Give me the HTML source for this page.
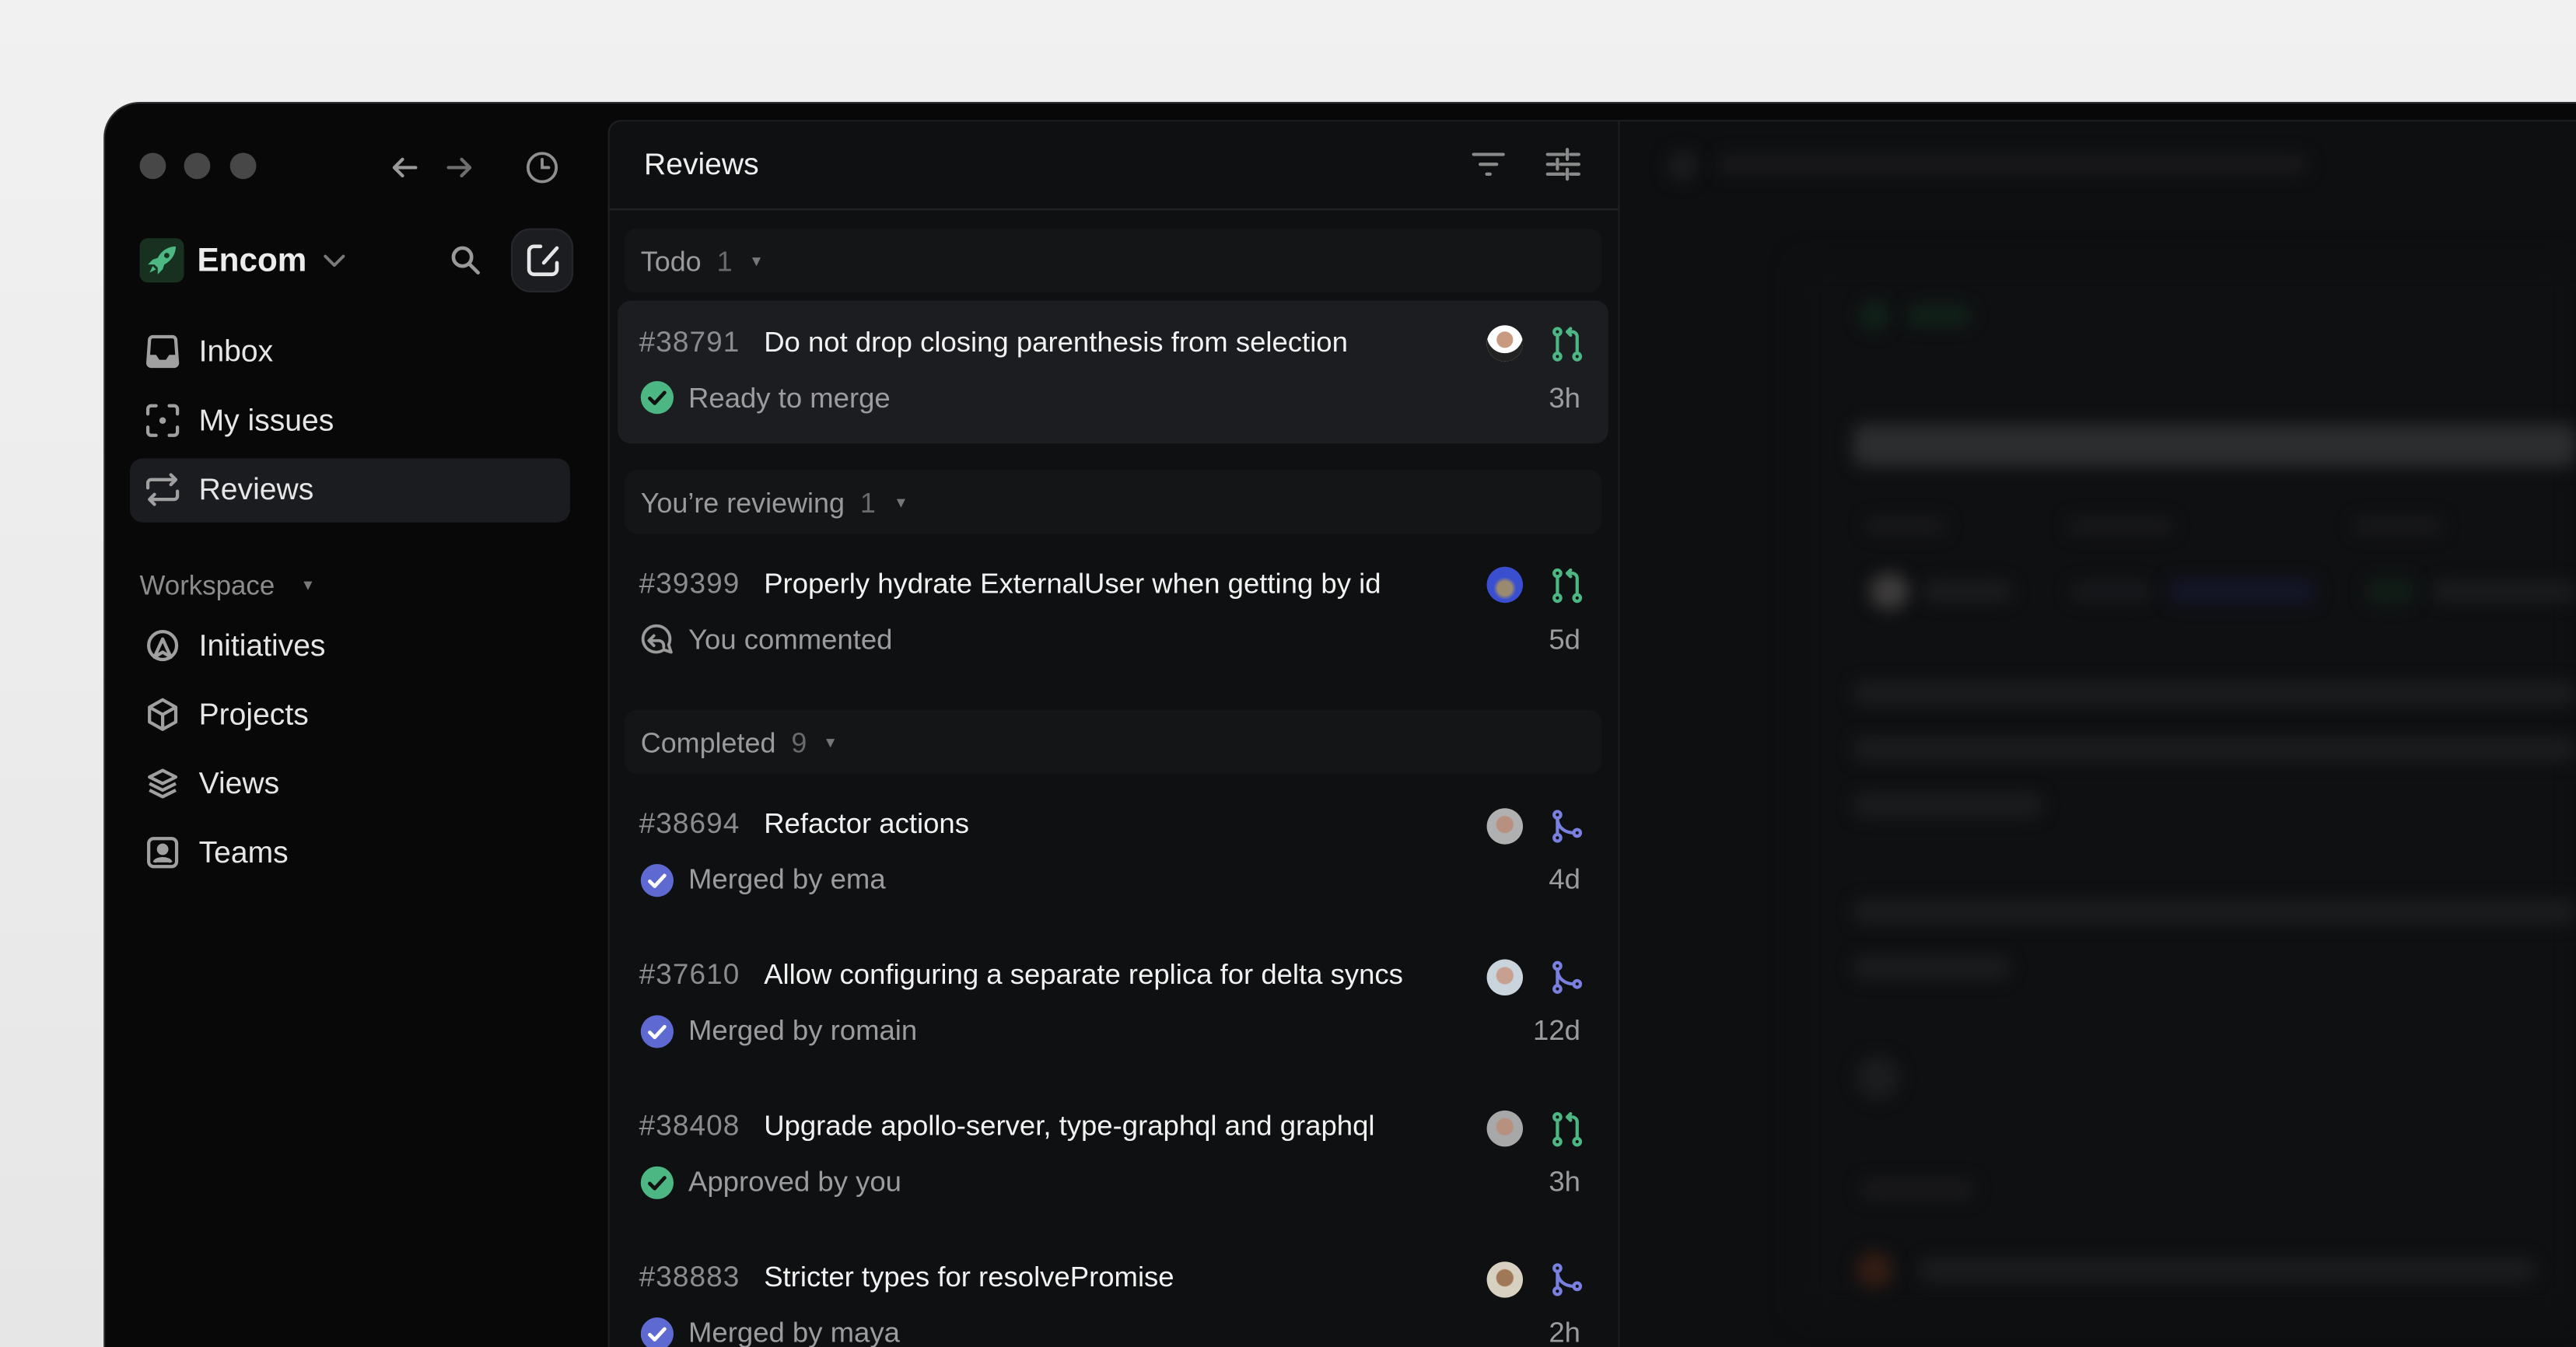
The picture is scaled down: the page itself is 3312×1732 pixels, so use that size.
<!DOCTYPE html>
<html><head><meta charset="utf-8"><style>
*{margin:0;padding:0;box-sizing:border-box}
html,body{width:3312px;height:1732px;overflow:hidden;background:#ececec}
#s{position:absolute;left:0;top:0;width:1568px;height:820px;overflow:hidden;transform:scale(2.11224);transform-origin:0 0;font-family:"Liberation Sans",sans-serif;background:linear-gradient(180deg,#f1f1f1,#e6e6e6)}
.a{position:absolute}
.win{left:63px;top:62px;width:1505px;height:758px;background:#080808;border:1.5px solid #2f3033;border-right:none;border-bottom:none;border-radius:22px 0 0 0}
.t{position:absolute;white-space:nowrap;line-height:1}
.nav{font-size:18.5px;color:#e6e6e6}
.gh{position:absolute;left:380px;width:595px;height:39px;background:#141517;border-radius:8px}
.gh span{position:absolute;top:11px;font-size:17px;color:#9a9a9c;white-space:nowrap}
.id{color:#8c8c8f;font-size:17.5px;letter-spacing:0.5px}
.ti{color:#f2f2f2;font-size:17.3px}
.st{color:#9c9c9f;font-size:17.3px}
.tm{color:#9c9c9f;font-size:17.3px;text-align:right;width:60px;left:902px}
.bl{position:absolute;background:#1c1d1f;border-radius:6px;filter:blur(5px)}
svg{position:absolute;overflow:visible}
</style></head><body><div id="s">
<div class="a win"></div>
<div class="a" style="left:85px;top:93px;width:16px;height:16px;border-radius:50%;background:#474747"></div>
<div class="a" style="left:112px;top:93px;width:16px;height:16px;border-radius:50%;background:#474747"></div>
<div class="a" style="left:140px;top:93px;width:16px;height:16px;border-radius:50%;background:#474747"></div>
<svg style="left:238px;top:95px" width="16" height="14" viewBox="0 0 16 14" fill="none" stroke="#9a9a9a" stroke-width="2" stroke-linecap="round" stroke-linejoin="round"><path d="M15 7H2M7 2L2 7l5 5"/></svg>
<svg style="left:272px;top:95px" width="16" height="14" viewBox="0 0 16 14" fill="none" stroke="#6e6e6e" stroke-width="2" stroke-linecap="round" stroke-linejoin="round"><path d="M1 7h13M9 2l5 5-5 5"/></svg>
<svg style="left:320px;top:92px" width="20" height="20" viewBox="0 0 20 20" fill="none" stroke="#8f8f8f" stroke-width="1.8" stroke-linecap="round"><circle cx="10" cy="10" r="8.6"/><path d="M10 5v5h4"/></svg>
<div class="a" style="left:85px;top:145px;width:27px;height:27px;border-radius:5px;background:#17301f"></div>
<svg style="left:89px;top:149px" width="19" height="19" viewBox="0 0 19 19"><path d="M18 1c-5 0-9 3-11 7L4 9l-3 3 4 0 2 2 0 4 3-3 1-3c4-2 7-6 7-11z" fill="#4cb782"/><circle cx="12.5" cy="6.5" r="1.6" fill="#17301f"/><path d="M4 13l-2 4 4-2z" fill="#4cb782"/></svg>
<div class="t" style="left:120px;top:149px;font-size:20px;font-weight:bold;color:#ececec">Encom</div>
<svg style="left:197px;top:155px" width="13" height="8" viewBox="0 0 13 8" fill="none" stroke="#7a7a7a" stroke-width="1.8" stroke-linecap="round" stroke-linejoin="round"><path d="M1 1l5.5 5.5L12 1"/></svg>
<svg style="left:274px;top:149px" width="19" height="19" viewBox="0 0 19 19" fill="none" stroke="#9a9a9a" stroke-width="2.2" stroke-linecap="round"><circle cx="7.5" cy="7.5" r="5.5"/><path d="M11.5 11.5l5.5 5.5"/></svg>
<div class="a" style="left:311px;top:139px;width:38px;height:39px;border-radius:12px;background:#1c1d21;border:1px solid #26272b"></div>
<svg style="left:320px;top:148px" width="21" height="21" viewBox="0 0 21 21" fill="none" stroke="#e6e6e6" stroke-width="2.2" stroke-linecap="round" stroke-linejoin="round"><path d="M9 2H5a3 3 0 0 0-3 3v11a3 3 0 0 0 3 3h11a3 3 0 0 0 3-3v-4"/><path d="M19 3l-8 9"/></svg>
<svg style="left:89px;top:204px" width="20" height="20" viewBox="0 0 20 20"><path d="M4 1h12a2 2 0 0 1 2 2l1 14a2 2 0 0 1-2 2H3a2 2 0 0 1-2-2L2 3a2 2 0 0 1 2-2z" fill="none" stroke="#a0a0a0" stroke-width="2"/><path d="M1.5 12H6l2 3h4l2-3h4.5V17a2 2 0 0 1-2 2H3a2 2 0 0 1-2-2z" fill="#a0a0a0"/></svg>
<div class="t nav" style="left:121px;top:205px">Inbox</div>
<svg style="left:89px;top:246px" width="20" height="20" viewBox="0 0 20 20" fill="none" stroke="#a0a0a0" stroke-width="2" stroke-linecap="round"><path d="M1 6V3a2 2 0 0 1 2-2h3M14 1h3a2 2 0 0 1 2 2v3M19 14v3a2 2 0 0 1-2 2h-3M6 19H3a2 2 0 0 1-2-2v-3"/><circle cx="10" cy="10" r="2" fill="#a0a0a0" stroke="none"/></svg>
<div class="t nav" style="left:121px;top:247px">My issues</div>
<div class="a" style="left:79px;top:279px;width:268px;height:39px;border-radius:8px;background:#1b1c20"></div>
<svg style="left:89px;top:288px" width="20" height="20" viewBox="0 0 20 20" fill="none" stroke="#a0a0a0" stroke-width="2" stroke-linecap="round" stroke-linejoin="round"><path d="M1 9V6a2 2 0 0 1 2-2h15M15 1l3 3-3 3M19 11v3a2 2 0 0 1-2 2H2M5 13l-3 3 3 3"/></svg>
<div class="t nav" style="left:121px;top:289px">Reviews</div>
<div class="t" style="left:85px;top:349px;font-size:16.5px;color:#8c8c8c">Workspace</div>
<div class="t" style="left:183px;top:352px;font-size:9px;color:#777">▼</div>
<svg style="left:89px;top:383px" width="20" height="20" viewBox="0 0 20 20" fill="none" stroke="#a0a0a0" stroke-width="2" stroke-linejoin="round"><circle cx="10" cy="10" r="8.5"/><path d="M5 17l5-11 5 11-5-3z"/></svg>
<div class="t nav" style="left:121px;top:384px">Initiatives</div>
<svg style="left:89px;top:425px" width="20" height="20" viewBox="0 0 20 20" fill="none" stroke="#a0a0a0" stroke-width="2" stroke-linejoin="round"><path d="M10 1l8 4.5v9L10 19l-8-4.5v-9zM2 5.5l8 4.5 8-4.5M10 10v9"/></svg>
<div class="t nav" style="left:121px;top:426px">Projects</div>
<svg style="left:89px;top:467px" width="20" height="20" viewBox="0 0 20 20" fill="none" stroke="#a0a0a0" stroke-width="2" stroke-linejoin="round"><path d="M10 2l8 4-8 4-8-4zM2 10l8 4 8-4M2 14l8 4 8-4"/></svg>
<div class="t nav" style="left:121px;top:468px">Views</div>
<svg style="left:89px;top:509px" width="20" height="20" viewBox="0 0 20 20" fill="none" stroke="#a0a0a0" stroke-width="2"><rect x="1.5" y="1.5" width="17" height="17" rx="3"/><circle cx="10" cy="8" r="2.5" fill="#a0a0a0"/><path d="M5 16c1-3 9-3 10 0" fill="#a0a0a0"/></svg>
<div class="t nav" style="left:121px;top:510px">Teams</div>
<div class="a" style="left:370px;top:73px;width:616px;height:747px;background:#0f1011;border:1px solid #1f2023;border-bottom:none;border-radius:8px 0 0 0"></div>
<div class="a" style="left:371px;top:127px;width:614px;height:1px;background:#222326"></div>
<div class="t" style="left:392px;top:91px;font-size:18.5px;color:#efefef">Reviews</div>
<svg style="left:896px;top:92px" width="20" height="16" viewBox="0 0 20 16" stroke="#8a8a8a" stroke-width="2" stroke-linecap="round"><path d="M1 2h18M5 8h10M9 14h2"/></svg>
<svg style="left:941px;top:90px" width="21" height="20" viewBox="0 0 21 20" stroke="#8a8a8a" stroke-width="2" stroke-linecap="round"><path d="M1 4h10M15 4h5M13 1v6M1 10h4M9 10h11M7 7v6M1 16h10M15 16h5M13 13v6"/></svg>
<div class="gh" style="top:139px"><span style="left:10px">Todo <span style="position:static;color:#6a6a6d">&nbsp;1</span></span><span style="left:76px;top:15px;font-size:9px;color:#777">▼</span></div>
<div class="a" style="left:376px;top:183px;width:603px;height:87px;background:#1c1d21;border-radius:8px"></div>
<div class="gh" style="top:286px"><span style="left:10px">You’re reviewing <span style="position:static;color:#6a6a6d">&nbsp;1</span></span><span style="left:164px;top:15px;font-size:9px;color:#777">▼</span></div>
<div class="gh" style="top:432px"><span style="left:10px">Completed <span style="position:static;color:#6a6a6d">&nbsp;9</span></span><span style="left:121px;top:15px;font-size:9px;color:#777">▼</span></div>

<div class="t id" style="left:389px;top:200px">#38791</div><div class="t ti" style="left:465px;top:200px">Do not drop closing parenthesis from selection</div>
<div class="t st" style="left:419px;top:234px">Ready to merge</div><div class="t tm" style="top:234px">3h</div>
<div class="t id" style="left:389px;top:347px">#39399</div><div class="t ti" style="left:465px;top:347px">Properly hydrate ExternalUser when getting by id</div>
<div class="t st" style="left:419px;top:381px">You commented</div><div class="t tm" style="top:381px">5d</div>
<div class="t id" style="left:389px;top:493px">#38694</div><div class="t ti" style="left:465px;top:493px">Refactor actions</div>
<div class="t st" style="left:419px;top:527px">Merged by ema</div><div class="t tm" style="top:527px">4d</div>
<div class="t id" style="left:389px;top:585px">#37610</div><div class="t ti" style="left:465px;top:585px">Allow configuring a separate replica for delta syncs</div>
<div class="t st" style="left:419px;top:619px">Merged by romain</div><div class="t tm" style="top:619px">12d</div>
<div class="t id" style="left:389px;top:677px">#38408</div><div class="t ti" style="left:465px;top:677px">Upgrade apollo-server, type-graphql and graphql</div>
<div class="t st" style="left:419px;top:711px">Approved by you</div><div class="t tm" style="top:711px">3h</div>
<div class="t id" style="left:389px;top:769px">#38883</div><div class="t ti" style="left:465px;top:769px">Stricter types for resolvePromise</div>
<div class="t st" style="left:419px;top:803px;height:17px;overflow:hidden">Merged by maya</div><div class="t tm" style="top:803px;height:17px;overflow:hidden">2h</div>

<svg style="left:390px;top:232px" width="20" height="20"><circle cx="10" cy="10" r="10" fill="#4cb782"/><path d="M5.5 10.5l3 3 6-6.5" fill="none" stroke="#111" stroke-width="2.2" stroke-linecap="round" stroke-linejoin="round"/></svg>
<svg style="left:390px;top:379px" width="21" height="21" viewBox="0 0 21 21" fill="none" stroke="#9a9a9a" stroke-width="1.8" stroke-linejoin="round"><path d="M10 2a8 8 0 0 1 7 11.5l1.5 4.5-4.5-1.5A8 8 0 1 1 10 2z"/><path d="M8 14l-3-3 3-3M5 11h6a3 3 0 0 1 3 3v1" stroke-linecap="round"/></svg>
<svg style="left:390px;top:526px" width="20" height="20"><circle cx="10" cy="10" r="10" fill="#5e6ad2"/><path d="M5.5 10.5l3 3 6-6.5" fill="none" stroke="#fff" stroke-width="2.2" stroke-linecap="round" stroke-linejoin="round"/></svg>
<svg style="left:390px;top:618px" width="20" height="20"><circle cx="10" cy="10" r="10" fill="#5e6ad2"/><path d="M5.5 10.5l3 3 6-6.5" fill="none" stroke="#fff" stroke-width="2.2" stroke-linecap="round" stroke-linejoin="round"/></svg>
<svg style="left:390px;top:710px" width="20" height="20"><circle cx="10" cy="10" r="10" fill="#4cb782"/><path d="M5.5 10.5l3 3 6-6.5" fill="none" stroke="#111" stroke-width="2.2" stroke-linecap="round" stroke-linejoin="round"/></svg>
<svg style="left:390px;top:802px;overflow:hidden" width="20" height="18" viewBox="0 0 20 18"><circle cx="10" cy="10" r="10" fill="#5e6ad2"/><path d="M5.5 10.5l3 3 6-6.5" fill="none" stroke="#fff" stroke-width="2.2" stroke-linecap="round" stroke-linejoin="round"/></svg>

<div class="a" style="left:905px;top:198px;width:22px;height:22px;border-radius:50%;background:radial-gradient(circle at 50% 40%,#c89a80 0 28%,#fff 30%);box-shadow:inset 0 -5px 0 #222"></div>
<div class="a" style="left:905px;top:345px;width:22px;height:22px;border-radius:50%;background:radial-gradient(circle at 50% 60%,#9a8a70 0 25%,#3a4fd0 40%)"></div>
<div class="a" style="left:905px;top:492px;width:22px;height:22px;border-radius:50%;background:radial-gradient(circle at 50% 45%,#b89080 0 30%,#b0b0b0 34%)"></div>
<div class="a" style="left:905px;top:584px;width:22px;height:22px;border-radius:50%;background:radial-gradient(circle at 50% 45%,#c8a090 0 30%,#c9d4dc 34%)"></div>
<div class="a" style="left:905px;top:676px;width:22px;height:22px;border-radius:50%;background:radial-gradient(circle at 50% 45%,#b89080 0 30%,#a8a8a8 34%)"></div>
<div class="a" style="left:905px;top:768px;width:22px;height:22px;border-radius:50%;background:radial-gradient(circle at 50% 45%,#a07858 0 30%,#d8d0c0 34%)"></div>

<svg style="left:945px;top:199px" width="18" height="21" viewBox="0 0 18 21" fill="none" stroke="#4cb782" stroke-width="2" stroke-linecap="round" stroke-linejoin="round"><circle cx="3" cy="3" r="2"/><circle cx="3" cy="18" r="2"/><circle cx="15" cy="18" r="2"/><path d="M3 5v11M15 16V6a3 3 0 0 0-3-3H9M11 1L9 3l2 2"/></svg>
<svg style="left:945px;top:346px" width="18" height="21" viewBox="0 0 18 21" fill="none" stroke="#4cb782" stroke-width="2" stroke-linecap="round" stroke-linejoin="round"><circle cx="3" cy="3" r="2"/><circle cx="3" cy="18" r="2"/><circle cx="15" cy="18" r="2"/><path d="M3 5v11M15 16V6a3 3 0 0 0-3-3H9M11 1L9 3l2 2"/></svg>
<svg style="left:945px;top:677px" width="18" height="21" viewBox="0 0 18 21" fill="none" stroke="#4cb782" stroke-width="2" stroke-linecap="round" stroke-linejoin="round"><circle cx="3" cy="3" r="2"/><circle cx="3" cy="18" r="2"/><circle cx="15" cy="18" r="2"/><path d="M3 5v11M15 16V6a3 3 0 0 0-3-3H9M11 1L9 3l2 2"/></svg>
<svg style="left:945px;top:493px" width="18" height="20" viewBox="0 0 18 20" fill="none" stroke="#7a80e0" stroke-width="2" stroke-linecap="round"><circle cx="3" cy="3" r="2"/><circle cx="3" cy="17" r="2"/><circle cx="15" cy="14" r="2"/><path d="M3 5v10M3 5c0 6 5 9 10 9"/></svg>
<svg style="left:945px;top:585px" width="18" height="20" viewBox="0 0 18 20" fill="none" stroke="#7a80e0" stroke-width="2" stroke-linecap="round"><circle cx="3" cy="3" r="2"/><circle cx="3" cy="17" r="2"/><circle cx="15" cy="14" r="2"/><path d="M3 5v10M3 5c0 6 5 9 10 9"/></svg>
<svg style="left:945px;top:769px" width="18" height="20" viewBox="0 0 18 20" fill="none" stroke="#7a80e0" stroke-width="2" stroke-linecap="round"><circle cx="3" cy="3" r="2"/><circle cx="3" cy="17" r="2"/><circle cx="15" cy="14" r="2"/><path d="M3 5v10M3 5c0 6 5 9 10 9"/></svg>

<div class="a" style="left:986px;top:73px;width:582px;height:747px;background:#0e0f10;border-top:1px solid #1c1d20"></div>
<div class="a" style="left:1095px;top:160px;width:473px;height:640px;background:#0f1012;filter:blur(8px)"></div>
<div class="bl" style="left:1015px;top:92px;width:18px;height:18px;border-radius:50%"></div>
<div class="bl" style="left:1045px;top:94px;width:360px;height:12px;background:#19191b"></div>
<div class="bl" style="left:1132px;top:183px;width:18px;height:18px;border-radius:50%;background:#11231a"></div>
<div class="bl" style="left:1160px;top:186px;width:40px;height:12px;background:#11231a"></div>
<div class="bl" style="left:1128px;top:258px;width:440px;height:26px;background:#2c2d2f"></div>
<div class="bl" style="left:1135px;top:315px;width:50px;height:10px;background:#19191b"></div>
<div class="bl" style="left:1258px;top:315px;width:65px;height:10px;background:#19191b"></div>
<div class="bl" style="left:1432px;top:315px;width:55px;height:10px;background:#19191b"></div>
<div class="bl" style="left:1138px;top:349px;width:24px;height:22px;border-radius:50%;background:#3e3c3c"></div>
<div class="bl" style="left:1170px;top:354px;width:55px;height:12px"></div>
<div class="bl" style="left:1260px;top:354px;width:50px;height:12px;background:#18191c"></div>
<div class="bl" style="left:1320px;top:352px;width:90px;height:16px;background:#141527"></div>
<div class="bl" style="left:1440px;top:352px;width:30px;height:16px;background:#111d17"></div>
<div class="bl" style="left:1480px;top:354px;width:88px;height:12px"></div>
<div class="bl" style="left:1128px;top:415px;width:440px;height:14px"></div>
<div class="bl" style="left:1128px;top:449px;width:440px;height:14px"></div>
<div class="bl" style="left:1128px;top:483px;width:115px;height:14px"></div>
<div class="bl" style="left:1128px;top:548px;width:440px;height:14px"></div>
<div class="bl" style="left:1128px;top:582px;width:95px;height:14px"></div>
<div class="bl" style="left:1130px;top:643px;width:26px;height:26px;border-radius:50%"></div>
<div class="bl" style="left:1132px;top:718px;width:70px;height:12px;background:#19191b"></div>
<div class="bl" style="left:1130px;top:762px;width:22px;height:22px;border-radius:50%;background:#351d14"></div>
<div class="bl" style="left:1168px;top:766px;width:375px;height:14px"></div>
</div></body></html>
